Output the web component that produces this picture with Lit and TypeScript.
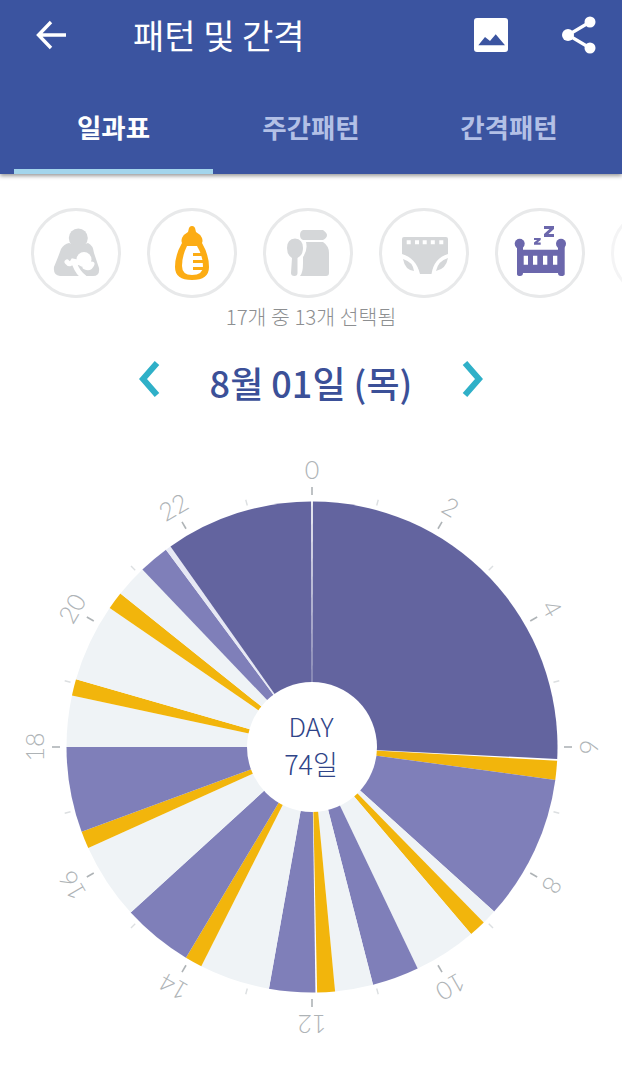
import { LitElement, html, css, svg } from "lit";
import { customElement } from "lit/decorators.js";

const DARK = "#63649f";
const LIGHT = "#7f7fb9";
const PALE = "#eff3f6";
const GOLD = "#f2b50c";

// [start angle, end angle, colour], clockwise from the top of the clock
const SLICES: [number, number, string][] = [
  [0.2, 92.8, DARK],
  [93.2, 97.7, GOLD],
  [97.7, 132.1, LIGHT],
  [132.1, 135.6, PALE],
  [135.6, 139.6, GOLD],
  [139.6, 154.5, PALE],
  [154.5, 165.6, LIGHT],
  [165.6, 174.6, PALE],
  [174.6, 178.8, GOLD],
  [179.2, 190.1, LIGHT],
  [190.1, 206.8, PALE],
  [206.8, 210.9, GOLD],
  [210.9, 227.6, LIGHT],
  [227.6, 245.7, PALE],
  [245.7, 249.8, GOLD],
  [249.8, 270, LIGHT],
  [270, 282.1, PALE],
  [282.1, 286, GOLD],
  [286, 304.5, PALE],
  [304.5, 308.7, GOLD],
  [308.7, 316.3, PALE],
  [316.3, 323.5, LIGHT],
  [323.5, 324.8, "#e6e8f4"],
  [324.8, 359.8, DARK],
];

const CX = 312;
const CY = 330;
const R = 245.5;

function point(angle: number, r: number) {
  const a = (angle * Math.PI) / 180;
  return `${(CX + r * Math.sin(a)).toFixed(2)} ${(CY - r * Math.cos(a)).toFixed(2)}`;
}

function slicePath(start: number, end: number) {
  const large = end - start > 180 ? 1 : 0;
  return `M${CX} ${CY}L${point(start, R)}A${R} ${R} 0 ${large} 1 ${point(end, R)}Z`;
}

@customElement("app-root")
export class AppRoot extends LitElement {
  static styles = css`
    :host {
      display: block;
      width: 622px;
      height: 1080px;
      overflow: hidden;
      background: #fff;
      font-family: "Noto Sans CJK KR", "Noto Sans", sans-serif;
    }
    .appbar {
      background: #3b54a0;
      height: 174px;
      box-shadow: 0 2px 4px rgba(0, 0, 0, 0.4);
      position: relative;
      display: flex;
      flex-direction: column;
    }
    .toolbar {
      height: 70px;
      display: flex;
      align-items: center;
      padding: 0 26px 0 36px;
    }
    .title {
      flex: 1;
      margin-left: 65px;
      color: #fff;
      font-size: 34px;
      line-height: 1;
    }
    .tool {
      display: block;
    }
    .tool.image {
      margin-right: 54px;
    }
    .tabs {
      flex: 1;
      display: flex;
      padding: 0 14px;
    }
    .tab {
      width: 198px;
      display: flex;
      align-items: center;
      justify-content: center;
      color: #b3c0e6;
      font-size: 26.5px;
      font-weight: 700;
      padding-top: 14px;
      border-bottom: 5px solid transparent;
    }
    .tab.active {
      width: 199px;
      margin-right: -1px;
      color: #fff;
      border-bottom-color: #a3d5ec;
    }
    .filters {
      display: flex;
      gap: 26px;
      padding: 34px 0 0 31px;
      overflow: hidden;
    }
    .filter {
      flex: none;
      box-sizing: border-box;
      width: 90px;
      height: 90px;
      border: 3px solid #e8e9ea;
      border-radius: 50%;
    }
    .filter svg {
      display: block;
    }
    .filter.fade {
      border-color: #f4f4f5;
    }
    .count {
      margin-top: 5px;
      text-align: center;
      color: #8d8f91;
      font-size: 20.5px;
      font-weight: 300;
      line-height: 26px;
    }
    .date {
      margin-top: 26px;
      display: flex;
      align-items: center;
      justify-content: center;
      height: 54px;
      color: #3b5098;
      font-size: 36px;
      font-weight: 500;
    }
    .date span {
      width: 250px;
      text-align: center;
      margin: 0 26px;
    }
    .date svg {
      margin-bottom: 6px;
    }
    .chart {
      display: block;
      margin-top: 8px;
    }
    .label {
      font-family: Lato, "Noto Sans", sans-serif;
      font-size: 25px;
      font-weight: 300;
      fill: #aeb3b6;
    }
    .day {
      font-family: "Noto Sans CJK KR", sans-serif;
      font-weight: 300;
      fill: #2f4488;
    }
  `;

  private renderChart() {
    const ticks = [];
    for (let h = 0; h < 24; h++) {
      const angle = h * 15;
      if (h % 2 === 0) {
        const p = point(angle, 278).split(" ");
        ticks.push(svg`
          <path d="M${point(angle, 252)}L${point(angle, 260)}" stroke="#aeb3b6" stroke-width="1.6" />
          <text class="label" x=${p[0]} y=${p[1]} text-anchor="middle" dominant-baseline="central"
            transform="rotate(${angle} ${p[0]} ${p[1]})">${h}</text>
        `);
      } else {
        ticks.push(svg`<path d="M${point(angle, 250)}L${point(angle, 256)}" stroke="#dcdfe1" stroke-width="1.4" />`);
      }
    }
    return html`
      <svg class="chart" width="622" height="640" viewBox="0 0 622 640">
        ${SLICES.map(([a, b, c]) => svg`<path d=${slicePath(a, b)} fill=${c} />`)}
        ${ticks}
        <circle cx=${CX} cy=${CY} r="65" fill="#fff" />
        <text class="day" x=${CX - 1} y=${CY - 10} text-anchor="middle" font-size="26">DAY</text>
        <text class="day" x=${CX - 1} y=${CY + 28} text-anchor="middle" font-size="27">74일</text>
      </svg>
    `;
  }

  render() {
    return html`
      <div class="appbar">
        <div class="toolbar">
          <svg class="tool" width="32" height="30" viewBox="0 0 32 30" fill="none" stroke="#fff" stroke-width="3.4">
            <path d="M30 15H3M15 2L2.500 15L15 28" />
          </svg>
          <div class="title">패턴 및 간격</div>
          <svg class="tool image" width="34" height="34" viewBox="0 0 34 34">
            <path fill="#fff" d="M3 0H31a3 3 0 0 1 3 3V31a3 3 0 0 1-3 3H3a3 3 0 0 1-3-3V3a3 3 0 0 1 3-3Z" />
            <path fill="#3b54a0" d="M4.300 27.300L11 19L16 23L21.700 16.300L31 27.300Z" />
          </svg>
          <svg class="tool" width="34" height="38" viewBox="0 0 34 38" fill="#fff">
            <path d="M28 6L6 19L28 32" fill="none" stroke="#fff" stroke-width="3.2" />
            <circle cx="28" cy="6" r="5.500" /><circle cx="6" cy="19" r="6" /><circle cx="28" cy="32" r="5.500" />
          </svg>
        </div>
        <div class="tabs">
          <div class="tab active">일과표</div>
          <div class="tab">주간패턴</div>
          <div class="tab">간격패턴</div>
        </div>
      </div>
      <div class="filters">
        <div class="filter">
          <svg width="84" height="84" viewBox="-42 -42 84 84" fill="#d5d7d9">
            <circle cx="2.300" cy="-15" r="9.500" />
            <path d="M-7 -10Q2 -6 12 -10Q17 -8 18 0L23 15Q24 23 17 23H-16Q-23 22 -22 14Q-17 2 -15 -4Q-12 -9 -7 -10Z" />
            <circle cx="8" cy="6.500" r="7.500" fill="#fff" />
            <path d="M-9 9Q-6 13 -3 8L5 10M-1 12Q2 20 8 24M9 14Q14 16 16 11" fill="none" stroke="#fff" stroke-width="5" stroke-linecap="round" />
          </svg>
        </div>
        <div class="filter">
          <svg width="84" height="84" viewBox="-42 -42 84 84">
            <path fill="#fcac14" d="M0 -27Q3 -27 3.500 -23L4 -21Q8 -19 10 -15Q11 -12 10 -10Q17 2 17 14Q17 27 0 27Q-17 27 -17 14Q-17 2 -10 -10Q-11 -12 -10 -15Q-8 -19 -4 -21L-3.500 -23Q-3 -27 0 -27Z" />
            <path fill="#fff" d="M-5 -7H5Q11 3 11 13Q11 22 0 22Q-10 22 -10 13Q-10 3 -5 -7Z" />
            <path fill="#fcac14" d="M1 0H11V3H1ZM1 7H12V10H1ZM1 14H12V17H1Z" />
          </svg>
        </div>
        <div class="filter">
          <svg width="84" height="84" viewBox="-42 -42 84 84" fill="#d5d7d9">
            <path d="M-5 -23H15Q19 -20 19 -18Q19 -15 15 -13H-5Q-8 -14 -8 -18Q-8 -22 -5 -23Z" />
            <path d="M-2 -11H15Q21 -7 21 0V20Q21 23 18 23H-8Q-5 20 -5 10V4Q0 -3 -2 -11Z" />
            <path d="M-13 -14.500Q-5 -14 -5 -5Q-5 2 -10.500 5V20Q-10.500 23 -13.500 23Q-17 23 -17 20L-16 5Q-21 2 -21 -5Q-21 -14 -13 -14.500Z" />
          </svg>
        </div>
        <div class="filter">
          <svg width="84" height="84" viewBox="-42 -42 84 84" fill="#d5d7d9">
            <path d="M-20 -16H22Q24 -16 24 -14V1Q10 5 7.500 21H-4Q-8 5 -22 1V-14Q-22 -16 -20 -16Z" />
            <path d="M-21 6Q-11 9 -10 18Q-19 17 -21 6ZM24 5Q14 8 12 18Q22 16 24 5Z" />
            <path fill="#fff" d="M-17.300 -12.700h4v4h-4ZM-9 -12.700h4v4h-4ZM-1.300 -12.700h4v4h-4ZM6.800 -12.700h4v4h-4ZM15.300 -12.700h4v4h-4Z" />
          </svg>
        </div>
        <div class="filter">
          <svg width="84" height="84" viewBox="-42 -42 84 84" fill="#6b67ac">
            <path d="M4 -27H14V-24L8.500 -19H14V-16H4V-19L9.500 -24H4ZM-6 -15H.7V-13L-2.500 -10.500H.7V-8.300H-6V-10.500L-2.800 -13H-6Z" />
            <circle cx="-20.300" cy="-9.300" r="5" /><circle cx="21" cy="-9.300" r="5" />
            <path fill-rule="evenodd" d="M-23 -9H-17V-3.300H18V-9H24.700V21Q24.700 23 21 23Q18 23 18 20H-17Q-17 23 -20 23Q-23 23 -23 21ZM-16.300 2.700V11.700H-12V2.700ZM-7 2.700V11.700H-2.700V2.700ZM3 2.700V11.700H7.300V2.700ZM13 2.700V11.700H17.300V2.700Z" />
          </svg>
        </div>
        <div class="filter fade"></div>
      </div>
      <div class="count">17개 중 13개 선택됨</div>
      <div class="date">
        <svg width="22" height="36" viewBox="0 0 22 36" fill="none" stroke="#2fb0c8" stroke-width="6"><path d="M19 2L5 18L19 34" /></svg>
        <span>8월 01일 (목)</span>
        <svg width="22" height="36" viewBox="0 0 22 36" fill="none" stroke="#2fb0c8" stroke-width="6"><path d="M3 2L17 18L3 34" /></svg>
      </div>
      ${this.renderChart()}
    `;
  }
}
